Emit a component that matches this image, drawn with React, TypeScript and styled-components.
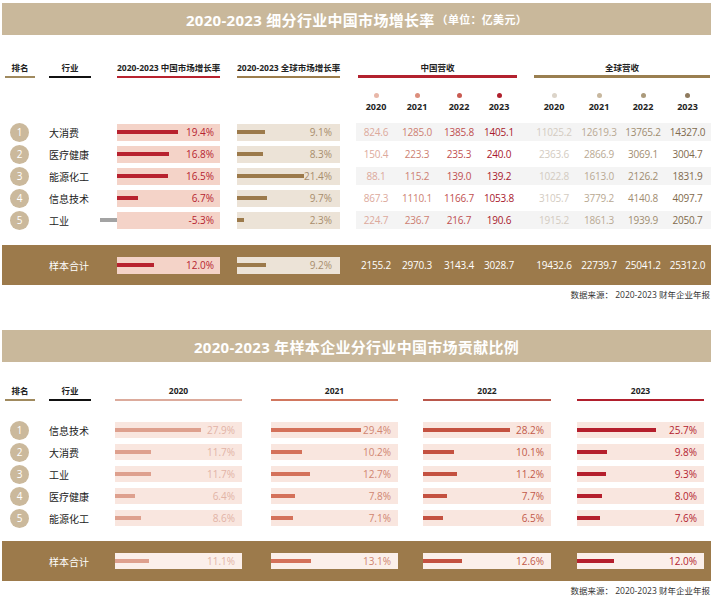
import React from 'react';
import styled, { createGlobalStyle } from 'styled-components';

const GlobalStyle = createGlobalStyle`
  html, body { margin: 0; padding: 0; background: #fff; }
  body { font-family: "Open Sans", "Noto Sans CJK SC", sans-serif; color: #222; }
`;

const Page = styled.div`
  width: 717px;
  padding-top: 3px;
`;

const Banner = styled.div<{ $top?: number }>`
  margin: ${(p) => p.$top ?? 0}px 6px 0 2px;
  height: 32px;
  background: #c9b89b;
  display: flex;
  align-items: center;
  justify-content: center;
  color: #fff;
  font-weight: 700;
  font-size: 15px;
  letter-spacing: 0.3px;
`;

const BannerSmall = styled.span`
  font-size: 11px;
  margin-left: 2px;
`;

const TEMPLATE1 = '44px 68px 120px 119px 355px';
const REV_TEMPLATE = '40px 42px 42px 38px 14px 44px 46px 42px 47px';
const TEMPLATE2 = '44px 66px 156px 152px 154px 134px';

const Grid = styled.div<{ $cols: string; $top?: number }>`
  display: grid;
  grid-template-columns: ${(p) => p.$cols};
  padding-left: 5px;
  margin-top: ${(p) => p.$top ?? 0}px;
  align-items: start;
`;

const HeadCell = styled.div<{ $w: number; $c: string }>`
  width: ${(p) => p.$w}px;
  font-size: 8.5px;
  font-weight: 700;
  line-height: 14px;
  padding-bottom: 1px;
  text-align: center;
  white-space: nowrap;
  color: #222;
  border-bottom: 2px solid ${(p) => p.$c};
`;

const RevHead = styled.div`
  display: grid;
  grid-template-columns: ${REV_TEMPLATE};
  align-items: center;
`;

const GroupHead = styled.div<{ $c: string; $from: number; $ml: number; $mr: number }>`
  grid-column: ${(p) => p.$from} / span 4;
  margin: 0 ${(p) => p.$mr}px 0 ${(p) => p.$ml}px;
  font-size: 8.5px;
  font-weight: 700;
  line-height: 14px;
  text-align: center;
  border-bottom: 3px solid ${(p) => p.$c};
`;

const YearCell = styled.div<{ $col: number }>`
  grid-column: ${(p) => p.$col};
  grid-row: 2;
  display: flex;
  flex-direction: column;
  align-items: center;
  padding-top: 15px;
`;

const Dot = styled.span<{ $c: string }>`
  width: 5px;
  height: 5px;
  border-radius: 50%;
  background: ${(p) => p.$c};
`;

const YearText = styled.span`
  margin-top: 3px;
  font-size: 9px;
  font-weight: 700;
  line-height: 12px;
  color: #222;
`;

const Rows = styled.div<{ $top: number }>`
  margin-top: ${(p) => p.$top}px;
`;

const Row = styled.div<{ $cols: string }>`
  display: grid;
  grid-template-columns: ${(p) => p.$cols};
  padding-left: 5px;
  height: 22px;
  align-items: center;
`;

const Circle = styled.div`
  width: 19px;
  height: 19px;
  margin-left: 5px;
  border-radius: 50%;
  background: #cbb99c;
  color: #fff;
  font-size: 10px;
  line-height: 19px;
  text-align: center;
`;

const Name = styled.div<{ $light?: boolean }>`
  font-size: 10px;
  color: ${(p) => (p.$light ? '#fff' : '#222')};
  white-space: nowrap;
`;

const BarBox = styled.div<{ $w: number; $h: number; $bg: string }>`
  position: relative;
  width: ${(p) => p.$w}px;
  height: ${(p) => p.$h}px;
  background: ${(p) => p.$bg};
  display: flex;
  align-items: center;
`;

const Bar = styled.div<{ $c: string }>`
  height: 4px;
  background: ${(p) => p.$c};
  flex-shrink: 0;
`;

const NegBar = styled.div`
  position: absolute;
  right: 100%;
  top: 50%;
  height: 4px;
  margin-top: -2px;
  background: #a3a3a3;
`;

const Pct = styled.span<{ $c: string; $pr: number }>`
  margin-left: auto;
  padding-right: ${(p) => p.$pr}px;
  font-size: 10px;
  color: ${(p) => p.$c};
  white-space: nowrap;
`;

const RevRow = styled.div<{ $gray?: boolean }>`
  display: grid;
  grid-template-columns: ${REV_TEMPLATE};
  height: 18px;
  align-items: center;
  background: ${(p) => (p.$gray ? '#f4f4f4' : 'transparent')};
`;

const Num = styled.span<{ $c: string; $col: number }>`
  grid-column: ${(p) => p.$col};
  text-align: center;
  font-size: 10px;
  letter-spacing: -0.2px;
  color: ${(p) => p.$c};
  white-space: nowrap;
`;

const TotalBand = styled.div<{ $cols: string; $top: number }>`
  display: grid;
  grid-template-columns: ${(p) => p.$cols};
  padding-left: 3px;
  margin: ${(p) => p.$top}px 6px 0 2px;
  height: 40px;
  align-items: center;
  background: #9c7a4b;
`;

const Source = styled.div`
  margin-top: 4px;
  padding-right: 7px;
  text-align: right;
  font-size: 8.5px;
  line-height: 12px;
  color: #333;
`;

/* ---------- data ---------- */

const cnYearColors = ['#dca99c', '#cd7f72', '#bf4f50', '#a8182c'];
const glYearColors = ['#d3cbc1', '#b9a993', '#9f8c70', '#7f6a4d'];
const cnDotColors = ['#e8b7a8', '#dc8e7c', '#c95b52', '#b0202d'];
const glDotColors = ['#dcd4c9', '#c8b89f', '#ab9a7b', '#8f7b5e'];

type Row1 = { name: string; cn: number; gl: number; cnRev: string[]; glRev: string[] };

const rows1: Row1[] = [
  { name: '大消费', cn: 19.4, gl: 9.1, cnRev: ['824.6', '1285.0', '1385.8', '1405.1'], glRev: ['11025.2', '12619.3', '13765.2', '14327.0'] },
  { name: '医疗健康', cn: 16.8, gl: 8.3, cnRev: ['150.4', '223.3', '235.3', '240.0'], glRev: ['2363.6', '2866.9', '3069.1', '3004.7'] },
  { name: '能源化工', cn: 16.5, gl: 21.4, cnRev: ['88.1', '115.2', '139.0', '139.2'], glRev: ['1022.8', '1613.0', '2126.2', '1831.9'] },
  { name: '信息技术', cn: 6.7, gl: 9.7, cnRev: ['867.3', '1110.1', '1166.7', '1053.8'], glRev: ['3105.7', '3779.2', '4140.8', '4097.7'] },
  { name: '工业', cn: -5.3, gl: 2.3, cnRev: ['224.7', '236.7', '216.7', '190.6'], glRev: ['1915.2', '1861.3', '1939.9', '2050.7'] },
];

const total1: Row1 = {
  name: '样本合计', cn: 12.0, gl: 9.2,
  cnRev: ['2155.2', '2970.3', '3143.4', '3028.7'],
  glRev: ['19432.6', '22739.7', '25041.2', '25312.0'],
};

const rows2 = [
  { name: '信息技术', v: [27.9, 29.4, 28.2, 25.7] },
  { name: '大消费', v: [11.7, 10.2, 10.1, 9.8] },
  { name: '工业', v: [11.7, 12.7, 11.2, 9.3] },
  { name: '医疗健康', v: [6.4, 7.8, 7.7, 8.0] },
  { name: '能源化工', v: [8.6, 7.1, 6.5, 7.6] },
];
const total2 = [11.1, 13.1, 12.6, 12.0];

const shareCols = [
  { year: '2020', line: '#dcab9c', bar: '#dea08e', text: '#e2b3a6', w: 127 },
  { year: '2021', line: '#d1775f', bar: '#d4715a', text: '#d08571', w: 127 },
  { year: '2022', line: '#b9574b', bar: '#c45140', text: '#c25a4a', w: 128 },
  { year: '2023', line: '#b11f2d', bar: '#b51f2d', text: '#b3222f', w: 127 },
];

const CN_RED = '#b8222f';
const GL_BROWN = '#9c7d4c';

const fmt = (n: number) => `${n.toFixed(1)}%`;

function RateBox({ value, kind }: { value: number; kind: 'cn' | 'gl' }) {
  const bg = kind === 'cn' ? '#f4d3c8' : '#ece3d7';
  const barC = kind === 'cn' ? '#b8222f' : '#9c7a4b';
  const txt = kind === 'cn' ? '#b62330' : '#a88d6c';
  const w = Math.abs(value) * 3.12;
  return (
    <BarBox $w={103} $h={17} $bg={bg}>
      {value >= 0 ? <Bar $c={barC} style={{ width: w }} /> : <NegBar style={{ width: w }} />}
      <Pct $c={txt} $pr={kind === 'cn' ? 6 : 8}>{fmt(value)}</Pct>
    </BarBox>
  );
}

function RevNums({ cn, gl, light }: { cn: string[]; gl: string[]; light?: boolean }) {
  return (
    <>
      {cn.map((n, i) => (
        <Num key={'c' + i} $col={i + 1} $c={light ? '#fff' : cnYearColors[i]}>{n}</Num>
      ))}
      {gl.map((n, i) => (
        <Num key={'g' + i} $col={i + 6} $c={light ? '#fff' : glYearColors[i]}>{n}</Num>
      ))}
    </>
  );
}

function GrowthSection() {
  return (
    <>
      <Banner>
        2020-2023 细分行业中国市场增长率<BannerSmall>（单位：亿美元）</BannerSmall>
      </Banner>
      <Grid $cols={TEMPLATE1} $top={26}>
        <HeadCell $w={30} $c="#a08a5e">排名</HeadCell>
        <HeadCell $w={42} $c="#111">行业</HeadCell>
        <HeadCell $w={103} $c={CN_RED}>2020-2023 中国市场增长率</HeadCell>
        <HeadCell $w={103} $c={GL_BROWN}>2020-2023 全球市场增长率</HeadCell>
        <RevHead>
          <GroupHead $from={1} $c="#b3222f" $ml={2} $mr={1}>中国营收</GroupHead>
          <GroupHead $from={6} $c="#9a7f50" $ml={2} $mr={1}>全球营收</GroupHead>
          {['2020', '2021', '2022', '2023'].map((y, i) => (
            <YearCell key={'cy' + y} $col={i + 1}>
              <Dot $c={cnDotColors[i]} />
              <YearText>{y}</YearText>
            </YearCell>
          ))}
          {['2020', '2021', '2022', '2023'].map((y, i) => (
            <YearCell key={'gy' + y} $col={i + 6}>
              <Dot $c={glDotColors[i]} />
              <YearText>{y}</YearText>
            </YearCell>
          ))}
        </RevHead>
      </Grid>
      <Rows $top={8}>
        {rows1.map((r, i) => (
          <Row key={r.name} $cols={TEMPLATE1}>
            <Circle>{i + 1}</Circle>
            <Name>{r.name}</Name>
            <RateBox value={r.cn} kind="cn" />
            <RateBox value={r.gl} kind="gl" />
            <RevRow $gray={i % 2 === 0}>
              <RevNums cn={r.cnRev} gl={r.glRev} />
            </RevRow>
          </Row>
        ))}
      </Rows>
      <TotalBand $cols={TEMPLATE1} $top={14}>
        <span />
        <Name $light>{total1.name}</Name>
        <RateBox value={total1.cn} kind="cn" />
        <RateBox value={total1.gl} kind="gl" />
        <RevRow>
          <RevNums cn={total1.cnRev} gl={total1.glRev} light />
        </RevRow>
      </TotalBand>
      <Source>数据来源： 2020-2023 财年企业年报</Source>
    </>
  );
}

function ShareBox({ value, col, total }: { value: number; col: number; total?: boolean }) {
  const c = shareCols[col];
  return (
    <BarBox $w={c.w} $h={16} $bg={total ? '#fbefea' : '#f9e6df'}>
      <Bar $c={c.bar} style={{ width: value * 3.07 }} />
      <Pct $c={c.text} $pr={7}>{fmt(value)}</Pct>
    </BarBox>
  );
}

function ShareSection() {
  return (
    <>
      <Banner $top={29}>2020-2023 年样本企业分行业中国市场贡献比例</Banner>
      <Grid $cols={TEMPLATE2} $top={22}>
        <HeadCell $w={30} $c="#a08a5e">排名</HeadCell>
        <HeadCell $w={42} $c="#111">行业</HeadCell>
        {shareCols.map((c) => (
          <HeadCell key={c.year} $w={c.w} $c={c.line}>{c.year}</HeadCell>
        ))}
      </Grid>
      <Rows $top={18}>
        {rows2.map((r, i) => (
          <Row key={r.name} $cols={TEMPLATE2}>
            <Circle>{i + 1}</Circle>
            <Name>{r.name}</Name>
            {r.v.map((v, j) => (
              <ShareBox key={j} value={v} col={j} />
            ))}
          </Row>
        ))}
      </Rows>
      <TotalBand $cols={TEMPLATE2} $top={12}>
        <span />
        <Name $light>样本合计</Name>
        {total2.map((v, j) => (
          <ShareBox key={j} value={v} col={j} total />
        ))}
      </TotalBand>
      <Source>数据来源： 2020-2023 财年企业年报</Source>
    </>
  );
}

export default function App() {
  return (
    <>
      <GlobalStyle />
      <Page>
        <GrowthSection />
        <ShareSection />
      </Page>
    </>
  );
}
